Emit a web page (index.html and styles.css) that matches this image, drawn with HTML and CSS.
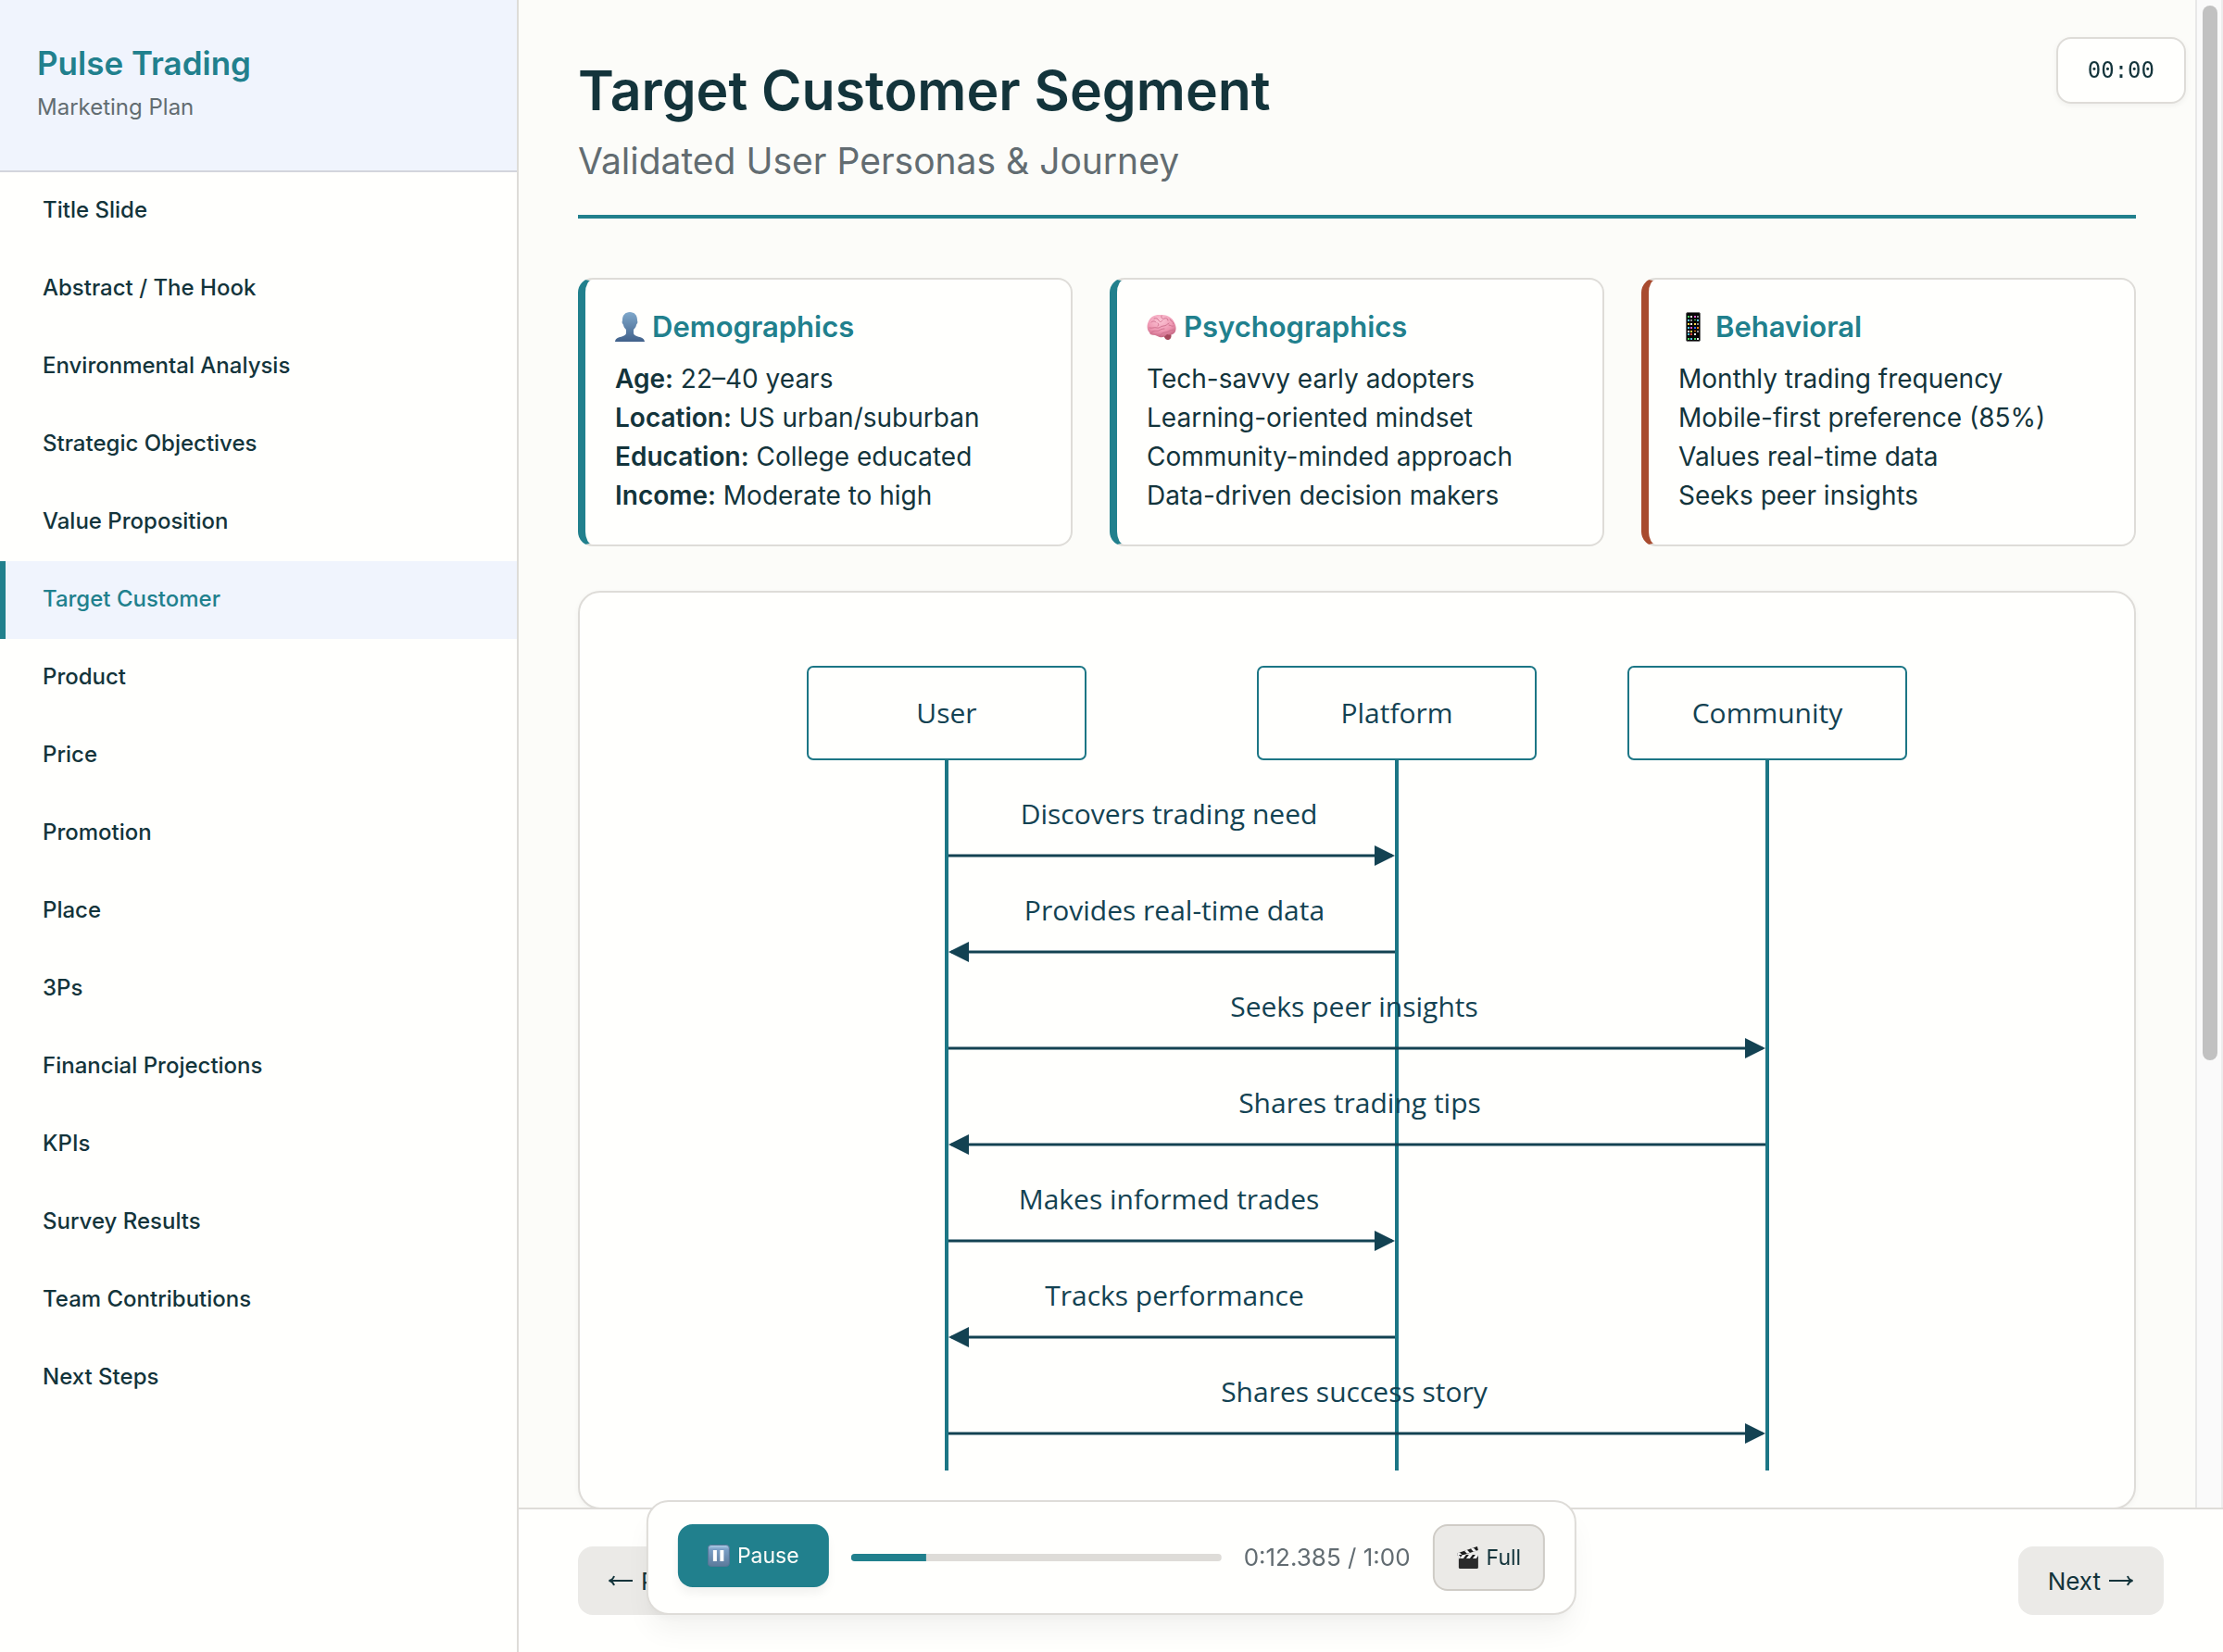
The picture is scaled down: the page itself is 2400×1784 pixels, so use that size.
FILE: index.html
```html
<!DOCTYPE html>
<html lang="en">
<head>
<meta charset="utf-8">
<title>Pulse Trading – Marketing Plan</title>
<link rel="stylesheet" href="styles.css">
</head>
<body>
<div class="app">
  <aside class="sidebar">
    <header class="brand">
      <h2 class="brand-name">Pulse Trading</h2>
      <p class="brand-sub">Marketing Plan</p>
    </header>
    <nav class="nav">
      <a class="nav-item" href="#title">Title Slide</a>
      <a class="nav-item" href="#abstract">Abstract / The Hook</a>
      <a class="nav-item" href="#environment">Environmental Analysis</a>
      <a class="nav-item" href="#objectives">Strategic Objectives</a>
      <a class="nav-item" href="#value">Value Proposition</a>
      <a class="nav-item active" href="#target" aria-current="page">Target Customer</a>
      <a class="nav-item" href="#product">Product</a>
      <a class="nav-item" href="#price">Price</a>
      <a class="nav-item" href="#promotion">Promotion</a>
      <a class="nav-item" href="#place">Place</a>
      <a class="nav-item" href="#3ps">3Ps</a>
      <a class="nav-item" href="#financial">Financial Projections</a>
      <a class="nav-item" href="#kpis">KPIs</a>
      <a class="nav-item" href="#survey">Survey Results</a>
      <a class="nav-item" href="#team">Team Contributions</a>
      <a class="nav-item" href="#next">Next Steps</a>
    </nav>
  </aside>

  <div class="stage">
    <div class="viewport">
      <main class="slide">
        <header class="slide-header">
          <h1 class="slide-title">Target Customer Segment</h1>
          <p class="slide-subtitle">Validated User Personas &amp; Journey</p>
        </header>

        <section class="cards">
          <article class="card">
            <h3 class="card-title">
              <svg class="emoji" viewBox="0 0 32 32" aria-hidden="true">
                <defs><linearGradient id="bust" x1="0" y1="0" x2="0" y2="1"><stop offset="0" stop-color="#7fa8cb"/><stop offset="1" stop-color="#41618a"/></linearGradient></defs>
                <path fill="url(#bust)" d="M16 0c-5 0-8 3.500-8 8.500 0 1.500-.6 1.600-.3 3 .3 1.300 1 1.500 1.300 2.500.6 2.500 1.800 3.800 3 5v3.500c0 2-1.500 3-4 3.700C4 27.300.5 28 0 32h32c-.5-4-4-4.700-8-5.800-2.500-.7-4-1.700-4-3.700V19c1.200-1.200 2.400-2.500 3-5 .3-1 1-1.200 1.300-2.500.3-1.400-.3-1.500-.3-3C24 3.500 21 0 16 0z"/>
              </svg>
              Demographics
            </h3>
            <p><strong>Age:</strong> 22–40 years</p>
            <p><strong>Location:</strong> US urban/suburban</p>
            <p><strong>Education:</strong> College educated</p>
            <p><strong>Income:</strong> Moderate to high</p>
          </article>
          <article class="card">
            <h3 class="card-title">
              <svg class="emoji" viewBox="0 0 32 32" aria-hidden="true">
                <defs><radialGradient id="brain" cx=".45" cy=".25" r=".8"><stop offset="0" stop-color="#fcc6d6"/><stop offset=".6" stop-color="#ee96b1"/><stop offset="1" stop-color="#c0607c"/></radialGradient></defs>
                <path fill="#a5485c" d="M18 23c3-2 8-1 8.500 2 .3 3-1.500 5-4 5s-4-3-4.500-7z"/>
                <path fill="url(#brain)" d="M2 10C4 5 9 2.500 15 3c8-.5 14 4 16 11 1.500 5 0 8.500-3 10-2 1-4 .5-6 0-2 2.500-5 4-8 3-2-.5-3-1.500-5-2-4 0-6-1-6-3-3-3-3-8-1-12z"/>
                <path fill="none" stroke="#cc6d8b" stroke-width=".9" stroke-linecap="round" d="M5 11c2-2 4-1 5 0M8 7c2-1 4 0 5 2s3 2 4 0M16 4c-1 2 1 4 3 3s4 0 4 2M25 8c1 2 4 2 4 5M3 17c3 1 5-1 8 0s4-2 7-2 4-2 6-3M5 22c3-3 6-1 8-2s3-2 6-2M14 26c1-2 3-4 6-4s5-3 9-3M24 14c2 0 3 2 5 1M12 12c1 1 1 2 0 3"/>
              </svg>
              Psychographics
            </h3>
            <p>Tech-savvy early adopters</p>
            <p>Learning-oriented mindset</p>
            <p>Community-minded approach</p>
            <p>Data-driven decision makers</p>
          </article>
          <article class="card card-accent">
            <h3 class="card-title">
              <svg class="emoji" viewBox="0 0 32 32" aria-hidden="true">
                <rect x="8.500" y=".5" width="15" height="31" rx="1.500" fill="#060606" stroke="#6d6d6d"/>
                <path fill="#4cd964" d="M10 4h2v2h-2zM10 28h2v2h-2zM17 28h2v2h-2zM17 8h2v1h-2z"/>
                <path fill="#5ac8fa" d="M10 8h2v2h-2zM20 8h2v2h-2zM10 16h2v2h-2zM13 28h2v2h-2zM10 23h2v2h-2z"/>
                <path fill="#ffd94a" d="M10 12h2v2h-2zM17 12h2v2h-2zM13 20h2v2h-2z"/>
                <path fill="#e25ad0" d="M17 4h2v2h-2zM13 16h2v2h-2z"/>
                <path fill="#ff8a1e" d="M20 16h2v2h-2zM17 20h2v1h-2z"/>
                <path fill="#2f6bff" d="M17 16h2v2h-2z"/>
                <path fill="#e5483f" d="M13 23h2v2h-2z"/>
                <path fill="#f4f4f4" d="M13 4h2v2h-2zM13 12h2v2h-2zM10 20h2v2h-2zM17 23h2v2h-2zM20 28h2v2h-2z"/>
                <path fill="#8e8e93" d="M20 4h2v2h-2zM13 8h2v2h-2zM20 12h2v2h-2zM20 20h2v2h-2z"/>
              </svg>
              Behavioral
            </h3>
            <p>Monthly trading frequency</p>
            <p>Mobile-first preference (85%)</p>
            <p>Values real-time data</p>
            <p>Seeks peer insights</p>
          </article>
        </section>

        <section class="diagram">
          <svg class="sequence" viewBox="0 0 1286 924" role="img" aria-label="Customer journey sequence diagram">
            <defs>
              <marker id="arrow" viewBox="0 0 22 22" refX="19" refY="11" markerWidth="22" markerHeight="22" markerUnits="userSpaceOnUse" orient="auto">
                <path class="head" d="M0 0l22 11L0 22z"/>
              </marker>
            </defs>
            <g class="lifelines">
              <path d="M200 148v768M686 148v768M1086 148v768"/>
            </g>
            <g class="actors">
              <rect x="50" y="48" width="300" height="100" rx="6"/>
              <rect x="536" y="48" width="300" height="100" rx="6"/>
              <rect x="936" y="48" width="300" height="100" rx="6"/>
            </g>
            <g class="messages">
              <path d="M202 252h479"/>
              <path d="M684 356H205"/>
              <path d="M202 460h879"/>
              <path d="M1084 564H205"/>
              <path d="M202 668h479"/>
              <path d="M684 772H205"/>
              <path d="M202 876h879"/>
            </g>
            <g class="labels">
              <text x="200" y="109">User</text>
              <text x="686" y="109">Platform</text>
              <text x="1086" y="109">Community</text>
              <text x="440" y="218">Discovers trading need</text>
              <text x="446" y="322">Provides real-time data</text>
              <text x="640" y="426">Seeks peer insights</text>
              <text x="646" y="530">Shares trading tips</text>
              <text x="440" y="634">Makes informed trades</text>
              <text x="446" y="738">Tracks performance</text>
              <text x="640" y="842">Shares success story</text>
            </g>
          </svg>
        </section>
      </main>
      <div class="scrollbar" aria-hidden="true"><div class="thumb"></div></div>
    </div>

    <footer class="controls">
      <button class="btn" type="button">
        <svg class="arrow" viewBox="0 0 28 16" aria-hidden="true"><path d="M27 8H2M7 3C6 6 4 7.500 1.500 8 4 8.500 6 10 7 13"/></svg>
        Previous
      </button>
      <button class="btn" type="button">
        Next
        <svg class="arrow" viewBox="0 0 28 16" aria-hidden="true"><path d="M1 8h25M21 3c1 3 3 4.500 5.500 5-2.500.5-4.500 2-5.500 5"/></svg>
      </button>
    </footer>
  </div>
</div>

<div class="timer">00:00</div>

<div class="player">
  <button class="play" type="button">
    <svg class="emoji-sm" viewBox="0 0 24 24" aria-hidden="true">
      <defs><linearGradient id="pz" x1="0" y1="0" x2="0" y2="1"><stop offset="0" stop-color="#b4d3ea"/><stop offset=".2" stop-color="#7b9fc6"/><stop offset="1" stop-color="#5c7a9b"/></linearGradient></defs>
      <rect x=".5" y=".5" width="23" height="23" rx="3.500" fill="url(#pz)" stroke="#557596"/>
      <path fill="#fff" d="M6 6h4v12H6zM13.500 6h4v12h-4z"/>
    </svg>
    Pause
  </button>
  <progress class="progress" max="400" value="81" aria-label="Playback progress"></progress>
  <span class="time">0:12.385 / 1:00</span>
  <button class="full" type="button">
    <svg class="emoji-sm" viewBox="0 0 24 24" aria-hidden="true">
      <rect x="2" y="12" width="21" height="12" rx="1.500" fill="#2b2b2b"/>
      <path fill="#1c1c1c" d="M0 7.500L22 0l1 4L1.500 11z"/>
      <path fill="#f2f2f2" d="M0 7.500l3-1 3 3-4.500 1.500zM8 4.800l3-1 3 3-3 1zM15 2.400l3-1 3 3.300-3 1z"/>
      <path fill="#1c1c1c" d="M2 9h21v4H2z"/>
      <path fill="#f2f2f2" d="M6 9h4l-3 4H3zM13 9h4l-3 4h-4zM20 9h3v1l-2 3h-4zM1 8l3 3-2 3z"/>
    </svg>
    Full
  </button>
</div>
</body>
</html>
```
FILE: styles.css
```css
* { box-sizing: border-box; }

:root {
  --teal: #21808d;
  --ink: #13343b;
  --muted: #626c71;
  --surface: #fffffd;
  --page: #fcfcf9;
  --tint: #f0f4fd;
  --line: #dedcd8;
}

body {
  margin: 0;
  background: var(--page);
  color: var(--ink);
  font-family: Inter, "Liberation Sans", sans-serif;
  font-size: 28px;
  line-height: 42px;
}

h1, h2, h3, p { margin: 0; }

button { font-family: inherit; color: inherit; cursor: pointer; }

.app { display: flex; height: 100vh; overflow: hidden; }

.sidebar {
  flex: 0 0 560px;
  background: var(--surface);
  border-right: 2px solid var(--line);
}

.brand {
  padding: 48px 40px;
  background: var(--tint);
  border-bottom: 2px solid #d3d5dc;
}
.brand-name { font-size: 35px; line-height: 40px; font-weight: 600; color: var(--teal); }
.brand-sub { margin-top: 8px; font-size: 24px; line-height: 40px; color: var(--muted); }

.nav-item {
  display: block;
  height: 84px;
  padding: 20px 40px;
  border-left: 6px solid transparent;
  font-size: 24px;
  line-height: 42px;
  font-weight: 500;
  color: var(--ink);
  text-decoration: none;
}
.nav-item.active { background: var(--tint); border-left-color: var(--teal); color: var(--teal); }

.stage { flex: 1; min-width: 0; display: flex; flex-direction: column; }
.viewport { flex: 1; min-height: 0; display: flex; }

.slide { flex: 1; min-width: 0; padding: 64px 64px 0; overflow: hidden; }

.slide-header { padding-bottom: 32px; margin-bottom: 64px; border-bottom: 4px solid var(--teal); }
.slide-title { font-size: 59px; line-height: 68px; font-weight: 600; }
.slide-subtitle { margin-top: 16px; font-size: 39px; line-height: 52px; color: var(--muted); }

.cards { display: grid; grid-template-columns: repeat(3, 1fr); gap: 40px; margin-bottom: 48px; }
.card {
  padding: 32px;
  background: var(--surface);
  border: 2px solid var(--line);
  border-left: 8px solid var(--teal);
  border-radius: 16px;
}
.card-accent { border-left-color: #a84b2f; }
.card-title {
  display: flex;
  align-items: center;
  gap: 8px;
  margin-bottom: 16px;
  font-size: 31px;
  line-height: 38px;
  font-weight: 600;
  color: var(--teal);
}
.card strong { font-weight: 600; }
.emoji { width: 32px; height: 32px; }

.diagram {
  display: flex;
  justify-content: center;
  padding: 32px;
  background: var(--surface);
  border: 2px solid var(--line);
  border-radius: 24px;
  box-shadow: 0 2px 6px rgba(0, 0, 0, .04);
}
.sequence { display: block; width: 100%; max-width: 1286px; height: auto; }
.lifelines { stroke: #1c7685; stroke-width: 4; }
.actors { fill: var(--surface); stroke: #1c7685; stroke-width: 2; }
.messages { fill: none; stroke: #134252; stroke-width: 3; }
.messages path { marker-end: url(#arrow); }
.head { fill: #134252; stroke: none; }
.labels { fill: #134252; font-family: "Open Sans", "Noto Sans", sans-serif; font-size: 30px; text-anchor: middle; }

.scrollbar {
  flex: 0 0 30px;
  padding: 6px 0 6px 6px;
  background: #fafafa;
  border-left: 2px solid #e8e8e8;
  border-right: 2px solid #ededed;
}
.thumb { width: 16px; height: 70.5%; border-radius: 8px; background: #c1c1c1; }

.controls {
  display: flex;
  justify-content: space-between;
  padding: 40px 64px;
  background: var(--surface);
  border-top: 2px solid var(--line);
}
.btn {
  display: flex;
  align-items: center;
  gap: 8px;
  height: 74px;
  padding: 0 32px;
  border: 0;
  border-radius: 16px;
  background: #ebeae7;
  font-size: 26px;
}
.arrow { width: 28px; height: 16px; fill: none; stroke: var(--ink); stroke-width: 2; }

.timer {
  position: fixed;
  top: 40px;
  right: 40px;
  padding: 14px 32px;
  background: var(--surface);
  border: 2px solid var(--line);
  border-radius: 16px;
  box-shadow: 0 2px 6px rgba(0, 0, 0, .05);
  font-family: "DejaVu Sans Mono", monospace;
  font-size: 24px;
  line-height: 40px;
}

.player {
  position: fixed;
  left: 50%;
  bottom: 40px;
  transform: translateX(-50%);
  display: flex;
  align-items: center;
  gap: 24px;
  padding: 24px 32px;
  background: var(--surface);
  border: 2px solid var(--line);
  border-radius: 24px;
  box-shadow: 0 20px 30px -4px rgba(0, 0, 0, .05), 0 8px 12px -4px rgba(0, 0, 0, .03);
  white-space: nowrap;
}
.play, .full { display: flex; align-items: center; gap: 8px; border-radius: 16px; font-size: 23px; }
.play {
  align-self: flex-start;
  height: 68px;
  padding: 0 32px;
  border: 0;
  background: var(--teal);
  color: #fcfcf9;
  box-shadow: 0 8px 12px -2px rgba(0, 0, 0, .06);
}
.full { height: 72px; padding: 0 24px; border: 2px solid #cfccc6; background: #ebeae7; }
.emoji-sm { width: 24px; height: 24px; }
.progress {
  appearance: none;
  width: 400px;
  height: 8px;
  border: 0;
  border-radius: 4px;
  overflow: hidden;
  background: var(--line);
}
.progress::-webkit-progress-bar { background: var(--line); }
.progress::-webkit-progress-value { background: var(--teal); }
.time { font-size: 26px; color: var(--muted); }
```
